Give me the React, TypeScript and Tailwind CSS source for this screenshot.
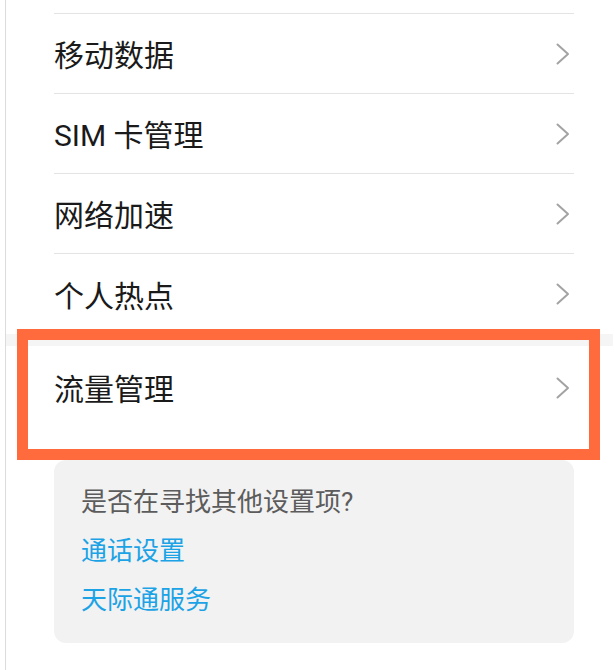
const rows = ['移动数据', 'SIM 卡管理', '网络加速', '个人热点'];

function Chevron() {
  return (
    <svg width="14" height="22" viewBox="0 0 14 22" fill="none" className="shrink-0">
      <polyline points="1.5,1.5 12,11 1.5,20.5" stroke="#a3a3a3" strokeWidth="2" strokeLinecap="round" strokeLinejoin="round" />
    </svg>
  );
}

export default function App() {
  return (
    <div
      className="relative h-[670px] w-[614px] overflow-hidden bg-white text-[#1a1a1a]"
      style={{ fontFamily: 'Roboto, "Noto Sans CJK SC", sans-serif' }}
    >
      <div className="ml-[5px] flex h-full flex-col border-l border-[#dcdcdc]">
        {/* settings list */}
        <div className="ml-[48px] mr-[40px]">
          <div className="h-[14px] border-b border-[#e3e3e3]" />
          {rows.map((label, i) => (
            <div
              key={label}
              className={`flex h-[80px] items-center justify-between pr-[4px] ${i < rows.length - 1 ? 'border-b border-[#e3e3e3]' : ''}`}
            >
              <span className="pt-[5px] text-[30px] leading-none">{label}</span>
              <Chevron />
            </div>
          ))}
        </div>

        {/* section gap */}
        <div className="mr-px h-[12px] bg-[#f5f5f5]" />

        <div className="ml-[48px] mr-[40px] flex h-[83px] items-center justify-between pr-[4px]">
          <span className="pt-[5px] text-[30px] leading-none">流量管理</span>
          <Chevron />
        </div>

        {/* suggestion card */}
        <div className="ml-[48px] mr-[40px] mt-[31px] rounded-[12px] bg-[#f2f2f2] px-[27px] pb-[18px] pt-[17px] text-[26px]">
          <div className="flex h-[50px] items-center text-[#5c5c5c]">是否在寻找其他设置项?</div>
          <div className="flex h-[48px] items-center text-[#1ca3e6]">通话设置</div>
          <div className="flex h-[50px] items-center text-[#1ca3e6]">天际通服务</div>
        </div>
      </div>

      {/* highlight overlay */}
      <div className="pointer-events-none absolute left-[17px] top-[329px] h-[131px] w-[583px] border-[11px] border-[#ff6b3d]" />
    </div>
  );
}
